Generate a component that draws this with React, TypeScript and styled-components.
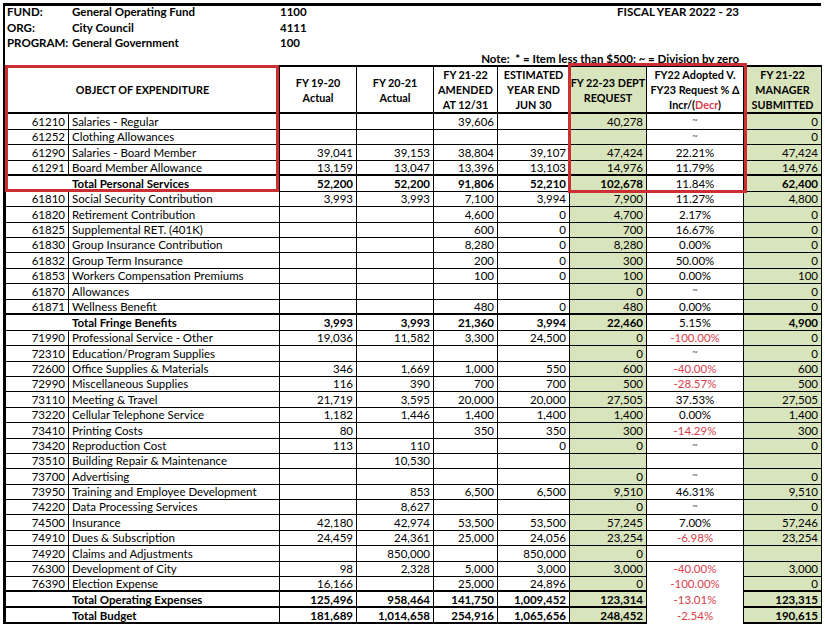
import React from "react";
import styled, { createGlobalStyle } from "styled-components";

const GlobalStyle = createGlobalStyle`
  body {
    margin: 0;
    background: #ffffff;
    font-family: Lato, "Liberation Sans", sans-serif;
    color: #000;
  }
`;

const GREEN = "#d8e4bc";
const RED = "#d9404a";
const COLS = [63, 211, 77, 77, 64, 72, 77, 97, 78];

type Row = {
  code?: string;
  desc: string;
  v: string[];
  total?: boolean;
  openPct?: boolean;
};

const rows: Row[] = [
  { code: "61210", desc: "Salaries - Regular", v: ["", "", "39,606", "", "40,278", "~", "0"] },
  { code: "61252", desc: "Clothing Allowances", v: ["", "", "", "", "", "~", "0"] },
  { code: "61290", desc: "Salaries - Board Member", v: ["39,041", "39,153", "38,804", "39,107", "47,424", "22.21%", "47,424"] },
  { code: "61291", desc: "Board Member Allowance", v: ["13,159", "13,047", "13,396", "13,103", "14,976", "11.79%", "14,976"] },
  { desc: "Total Personal Services", total: true, v: ["52,200", "52,200", "91,806", "52,210", "102,678", "11.84%", "62,400"] },
  { code: "61810", desc: "Social Security Contribution", v: ["3,993", "3,993", "7,100", "3,994", "7,900", "11.27%", "4,800"] },
  { code: "61820", desc: "Retirement Contribution", v: ["", "", "4,600", "0", "4,700", "2.17%", "0"] },
  { code: "61825", desc: "Supplemental RET. (401K)", v: ["", "", "600", "0", "700", "16.67%", "0"] },
  { code: "61830", desc: "Group Insurance Contribution", v: ["", "", "8,280", "0", "8,280", "0.00%", "0"] },
  { code: "61832", desc: "Group Term Insurance", v: ["", "", "200", "0", "300", "50.00%", "0"] },
  { code: "61853", desc: "Workers Compensation Premiums", v: ["", "", "100", "0", "100", "0.00%", "100"] },
  { code: "61870", desc: "Allowances", v: ["", "", "", "", "0", "~", "0"] },
  { code: "61871", desc: "Wellness Benefit", v: ["", "", "480", "0", "480", "0.00%", "0"] },
  { desc: "Total Fringe Benefits", total: true, v: ["3,993", "3,993", "21,360", "3,994", "22,460", "5.15%", "4,900"] },
  { code: "71990", desc: "Professional Service - Other", v: ["19,036", "11,582", "3,300", "24,500", "0", "-100.00%", "0"] },
  { code: "72310", desc: "Education/Program Supplies", v: ["", "", "", "", "0", "~", "0"] },
  { code: "72600", desc: "Office Supplies & Materials", v: ["346", "1,669", "1,000", "550", "600", "-40.00%", "600"] },
  { code: "72990", desc: "Miscellaneous Supplies", v: ["116", "390", "700", "700", "500", "-28.57%", "500"] },
  { code: "73110", desc: "Meeting & Travel", v: ["21,719", "3,595", "20,000", "20,000", "27,505", "37.53%", "27,505"] },
  { code: "73220", desc: "Cellular Telephone Service", v: ["1,182", "1,446", "1,400", "1,400", "1,400", "0.00%", "1,400"] },
  { code: "73410", desc: "Printing Costs", v: ["80", "", "350", "350", "300", "-14.29%", "300"] },
  { code: "73420", desc: "Reproduction Cost", v: ["113", "110", "", "0", "0", "~", "0"] },
  { code: "73510", desc: "Building Repair & Maintenance", v: ["", "10,530", "", "", "", "", ""] },
  { code: "73700", desc: "Advertising", v: ["", "", "", "", "0", "~", "0"] },
  { code: "73950", desc: "Training and Employee Development", v: ["", "853", "6,500", "6,500", "9,510", "46.31%", "9,510"] },
  { code: "74220", desc: "Data Processing Services", v: ["", "8,627", "", "", "0", "~", "0"] },
  { code: "74500", desc: "Insurance", v: ["42,180", "42,974", "53,500", "53,500", "57,245", "7.00%", "57,246"] },
  { code: "74910", desc: "Dues & Subscription", v: ["24,459", "24,361", "25,000", "24,056", "23,254", "-6.98%", "23,254"] },
  { code: "74920", desc: "Claims and Adjustments", v: ["", "850,000", "", "850,000", "0", "", ""] },
  { code: "76300", desc: "Development of City", v: ["98", "2,328", "5,000", "3,000", "3,000", "-40.00%", "3,000"], openPct: true },
  { code: "76390", desc: "Election Expense", v: ["16,166", "", "25,000", "24,896", "0", "-100.00%", "0"], openPct: true },
  { desc: "Total Operating Expenses", total: true, openPct: true, v: ["125,496", "958,464", "141,750", "1,009,452", "123,314", "-13.01%", "123,315"] },
  { desc: "Total Budget", total: true, openPct: true, v: ["181,689", "1,014,658", "254,916", "1,065,656", "248,452", "-2.54%", "190,615"] },
];

const Sheet = styled.div`
  position: relative;
  width: 816px;
  margin: 3px 0 0 3px;
  border-top: 3px solid #000;
  border-left: 2px solid #000;
`;

const Info = styled.div`
  display: grid;
  grid-template-columns: ${COLS.map((c) => `${c}px`).join(" ")};
  grid-template-rows: 15px 16px 15px 15px;
  margin-top: -2px;
  font-size: 11.5px;
  font-weight: 700;
  line-height: 15px;
`;

const InfoLabel = styled.div<{ $col: number }>`
  grid-column: ${(p) => p.$col};
  align-self: center;
  padding-left: ${(p) => (p.$col === 1 ? 2 : p.$col === 2 ? 4 : 1)}px;
  white-space: nowrap;
`;

const InfoRight = styled.div<{ $row: number }>`
  grid-column: 5 / 9;
  grid-row: ${(p) => p.$row};
  text-align: right;
  padding-right: 4px;
  padding-top: ${(p) => (p.$row === 4 ? 2 : 0)}px;
  white-space: pre;
  line-height: ${(p) => (p.$row === 4 ? 13 : 15)}px;
`;

const Grid = styled.table`
  border-collapse: collapse;
  table-layout: fixed;
  width: 816px;
  font-size: 11.5px;
`;

const HeadCell = styled.th<{ $green?: boolean }>`
  height: 43px;
  padding: 0;
  border: 1px solid #000;
  border-top: 2px solid #000;
  border-bottom: 2px solid #000;
  background: ${(p) => (p.$green ? GREEN : "#fff")};
  font-size: 10.8px;
  font-weight: 700;
  line-height: 15px;
  text-align: center;
  vertical-align: middle;
  white-space: nowrap;
`;

const Decr = styled.span`
  color: ${RED};
`;

const Line = styled.tr<{ $h: number }>`
  height: ${(p) => p.$h}px;
`;

const Cell = styled.td<{
  $align?: "left" | "right" | "center";
  $green?: boolean;
  $bold?: boolean;
  $red?: boolean;
  $total?: boolean;
  $open?: boolean;
  $last?: boolean;
}>`
  padding: 0 3px;
  border: 1px solid #000;
  border-top: ${(p) => (p.$total ? "2px solid #000" : "1px solid #000")};
  ${(p) => p.$last && "border-bottom: 2px solid #000;"}
  ${(p) => p.$open && "border-top: none; border-bottom: none;"}
  background: ${(p) => (p.$green ? GREEN : "#fff")};
  color: ${(p) => (p.$red ? RED : "#000")};
  font-weight: ${(p) => (p.$bold ? 700 : 400)};
  text-align: ${(p) => p.$align ?? "right"};
  line-height: 13px;
  white-space: nowrap;
  overflow: hidden;
`;

const Tilde = styled.span`
  font-size: 10px;
  color: #555;
  position: relative;
  top: -2px;
`;

const Highlight = styled.div<{ $l: number; $t: number; $w: number; $h: number }>`
  position: absolute;
  left: ${(p) => p.$l}px;
  top: ${(p) => p.$t}px;
  width: ${(p) => p.$w}px;
  height: ${(p) => p.$h}px;
  box-sizing: border-box;
  border: 3px solid #cc2e33;
  pointer-events: none;
`;

function BudgetRow({ row, last, height }: { row: Row; last: boolean; height: number }) {
  const { total, openPct } = row;
  return (
    <Line $h={height}>
      {total ? (
        <Cell colSpan={2} $align="left" $bold $total $last={last} style={{ paddingLeft: 66 }}>
          {row.desc}
        </Cell>
      ) : (
        <>
          <Cell>{row.code}</Cell>
          <Cell $align="left">{row.desc}</Cell>
        </>
      )}
      {row.v.map((val, i) => {
        const pct = i === 5;
        const green = i === 4 || i === 6;
        return (
          <Cell
            key={i}
            $align={pct ? "center" : "right"}
            $green={green}
            $bold={total && !pct}
            $red={pct && val.startsWith("-")}
            $total={total && !(pct && openPct)}
            $open={pct && openPct}
            $last={last && !pct}
          >
            {val === "~" ? <Tilde>~</Tilde> : val}
          </Cell>
        );
      })}
    </Line>
  );
}

// whole-pixel row heights that average out to the sheet's ~15.4px pitch
function rowHeights(list: Row[]) {
  let acc = 0;
  return list.map((r, i) => {
    const pitch = r.total ? 16 : i < 4 ? 15.5 : 15.37;
    const h = Math.round(acc + pitch) - Math.round(acc);
    acc += pitch;
    return h;
  });
}

export default function App() {
  const heights = rowHeights(rows);
  return (
    <>
      <GlobalStyle />
      <Sheet>
        <Info>
          <InfoLabel $col={1}>FUND:</InfoLabel>
          <InfoLabel $col={2}>General Operating Fund</InfoLabel>
          <InfoLabel $col={3}>1100</InfoLabel>
          <InfoRight $row={1}>FISCAL YEAR 2022 - 23</InfoRight>
          <InfoLabel $col={1}>ORG:</InfoLabel>
          <InfoLabel $col={2}>City Council</InfoLabel>
          <InfoLabel $col={3}>4111</InfoLabel>
          <InfoLabel $col={1}>PROGRAM:</InfoLabel>
          <InfoLabel $col={2}>General Government</InfoLabel>
          <InfoLabel $col={3}>100</InfoLabel>
          <InfoRight $row={4}>{"Note:  * = Item less than $500: ~ = Division by zero"}</InfoRight>
        </Info>
        <Grid>
          <colgroup>
            {COLS.map((w, i) => (
              <col key={i} style={{ width: w }} />
            ))}
          </colgroup>
          <thead>
            <tr>
              <HeadCell colSpan={2}>OBJECT OF EXPENDITURE</HeadCell>
              <HeadCell>
                FY 19-20
                <br />
                Actual
              </HeadCell>
              <HeadCell>
                FY 20-21
                <br />
                Actual
              </HeadCell>
              <HeadCell>
                FY 21-22
                <br />
                AMENDED
                <br />
                AT 12/31
              </HeadCell>
              <HeadCell>
                ESTIMATED
                <br />
                YEAR END
                <br />
                JUN 30
              </HeadCell>
              <HeadCell $green>
                FY 22-23 DEPT
                <br />
                REQUEST
              </HeadCell>
              <HeadCell>
                FY22 Adopted V.
                <br />
                FY23 Request % Δ
                <br />
                Incr/(<Decr>Decr</Decr>)
              </HeadCell>
              <HeadCell $green>
                FY 21-22
                <br />
                MANAGER
                <br />
                SUBMITTED
              </HeadCell>
            </tr>
          </thead>
          <tbody>
            {rows.map((r, i) => (
              <BudgetRow key={i} row={r} height={heights[i]} last={i === rows.length - 1} />
            ))}
          </tbody>
        </Grid>
        <Highlight $l={0} $t={59} $w={274} $h={127} />
        <Highlight $l={563} $t={57} $w={179} $h={130} />
      </Sheet>
    </>
  );
}
